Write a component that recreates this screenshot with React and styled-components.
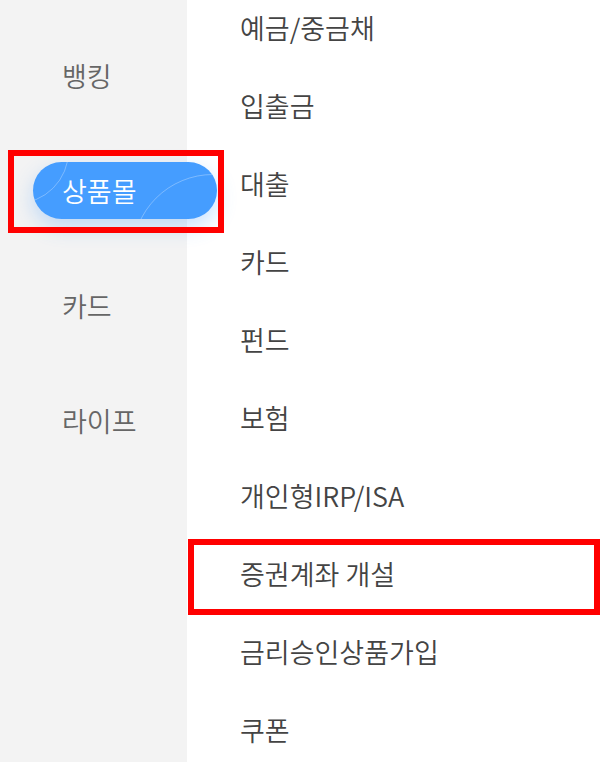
import styled, { createGlobalStyle } from "styled-components"

const Global = createGlobalStyle`
body {
  margin: 0;
  background: #fff;
  font-family: "Noto Sans CJK KR", "Noto Sans", sans-serif;
}
`

const side = ["뱅킹", "상품몰", "카드", "라이프"]
const items = [
  "예금/중금채",
  "입출금",
  "대출",
  "카드",
  "펀드",
  "보험",
  "개인형IRP/ISA",
  "증권계좌 개설",
  "금리승인상품가입",
  "쿠폰",
]

export default function App() {
  return (
    <Page>
      <Global />
      <Side>
        {side.map((s) => (
          <SideRow key={s}>
            {s === "상품몰" ? (
              <Pill>
                <ArcA />
                <ArcB />
                <PillText>{s}</PillText>
              </Pill>
            ) : (
              <SideText>{s}</SideText>
            )}
          </SideRow>
        ))}
      </Side>
      <List>
        {items.map((t) => (
          <Item key={t}>{t}</Item>
        ))}
      </List>
      <Mark $x={8} $y={150} $w={216} $h={83} />
      <Mark $x={188} $y={539} $w={412} $h={76} />
    </Page>
  )
}

const Page = styled.div`
position: relative;
width: 600px;
height: 762px;
display: flex;
overflow: hidden;
`

const Side = styled.div`
width: 187px;
flex-shrink: 0;
background-color: #f3f3f3;
padding-top: 18px;
position: relative;
z-index: 2;
`

const SideRow = styled.div`
height: 115px;
display: flex;
align-items: center;
`

const SideText = styled.div`
padding-left: 62px;
font-size: 27px;
font-weight: 350;
color: #666;
`

const Pill = styled.div`
position: relative;
flex-shrink: 0;
margin-left: 33px;
width: 184px;
height: 57px;
border-radius: 29px;
background-color: #459dff;
box-shadow: 0 8px 20px rgba(69, 157, 255, 0.3);
overflow: hidden;
display: flex;
align-items: center;
`

const ArcA = styled.div`
position: absolute;
left: -70px;
top: -64px;
width: 104px;
height: 104px;
border-radius: 50%;
border: 1.5px solid rgba(255, 255, 255, 0.3);
`

const ArcB = styled.div`
position: absolute;
left: 99px;
top: 12px;
width: 160px;
height: 160px;
border-radius: 50%;
border: 1.5px solid rgba(255, 255, 255, 0.3);
`

const PillText = styled.div`
position: relative;
padding-left: 29px;
font-size: 27px;
font-weight: 350;
color: #fff;
`

const List = styled.div`
flex: 1;
margin-top: -12px;
padding-left: 53px;
`

const Item = styled.div`
height: 78px;
display: flex;
align-items: center;
font-size: 27px;
font-weight: 350;
color: #444;
`

const Mark = styled.div`
position: absolute;
left: ${(p) => p.$x}px;
top: ${(p) => p.$y}px;
width: ${(p) => p.$w}px;
height: ${(p) => p.$h}px;
box-sizing: border-box;
border: 6px solid #ff0000;
z-index: 5;
`
